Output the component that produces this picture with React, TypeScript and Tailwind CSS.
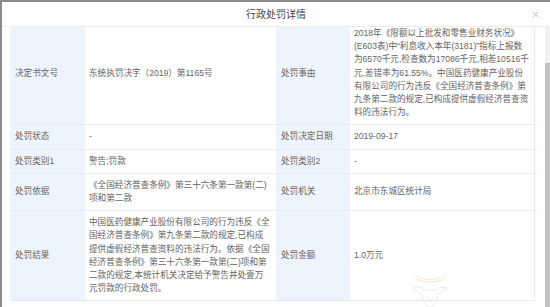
import { X } from "lucide-react";

const font = "font-['Liberation_Sans','Noto_Sans_CJK_SC',sans-serif]";

type Row = { l1: string; v1: string[]; l2: string; v2: string[] };

const rows: Row[] = [
  {
    l1: "决定书文号",
    v1: ["东统执罚决字（2019）第1165号"],
    l2: "处罚事由",
    v2: [
      "2018年《限额以上批发和零售业财务状况》",
      "(E603表)中“利息收入本年(3181)”指标上报数",
      "为6570千元,检查数为17086千元,相差10516千",
      "元,差错率为61.55%。中国医药健康产业股份",
      "有限公司的行为违反《全国经济普查条例》第",
      "九条第二款的规定,已构成提供虚假经济普查资",
      "料的违法行为。",
    ],
  },
  { l1: "处罚状态", v1: ["-"], l2: "处罚决定日期", v2: ["2019-09-17"] },
  { l1: "处罚类别1", v1: ["警告;罚款"], l2: "处罚类别2", v2: ["-"] },
  {
    l1: "处罚依据",
    v1: ["《全国经济普查条例》第三十六条第一款第(二)", "项和第二款"],
    l2: "处罚机关",
    v2: ["北京市东城区统计局"],
  },
  {
    l1: "处罚结果",
    v1: [
      "中国医药健康产业股份有限公司的行为违反《全",
      "国经济普查条例》第九条第二款的规定,已构成",
      "提供虚假经济普查资料的违法行为。依据《全国",
      "经济普查条例》第三十六条第一款第(二)项和第",
      "二款的规定,本统计机关决定给予警告并处壹万",
      "元罚款的行政处罚。",
    ],
    l2: "处罚金额",
    v2: ["1.0万元"],
  },
];

function Label({ text }: { text: string }) {
  return (
    <div className="flex items-center bg-[#eef4fb] border-b border-[#e3ebf5] px-[5px] py-[5px]">
      {text}
    </div>
  );
}

function Value({ lines }: { lines: string[] }) {
  return (
    <div className="flex flex-col justify-center border-b border-[#e3ebf5] px-[4px] py-[5px]">
      {lines.map((t, i) => (
        <span key={i} className="block whitespace-nowrap">
          {t}
        </span>
      ))}
    </div>
  );
}

export default function App() {
  return (
    <div className={`w-[550px] h-[307px] bg-[#8c8c8c] pl-[2px] pt-[2px] overflow-hidden ${font}`}>
      <div className="h-full bg-white flex flex-col">
        {/* header */}
        <div className="relative h-[25px] shrink-0 flex items-center justify-center border-b border-[#ececec] text-[10px] text-[#444]">
          行政处罚详情
          <X className="absolute right-[10px] top-[8px] w-[9px] h-[9px] text-[#777]" strokeWidth={1.2} />
        </div>

        {/* body */}
        <div className="flex-1 flex min-h-0">
          <div className="relative flex-1 overflow-hidden pl-[8px] pr-[10px]">
            <div className="-mt-[5px] grid grid-cols-[75px_191px_74px_185px] border-r border-[#e3ebf5] text-[8.6px] leading-[13.2px] text-[#656565]">
              {rows.map((r) => (
                <div key={r.l1} className="contents">
                  <Label text={r.l1} />
                  <Value lines={r.v1} />
                  <Label text={r.l2} />
                  <Value lines={r.v2} />
                </div>
              ))}
            </div>

            {/* watermark */}
            <svg
              className="absolute left-[408px] top-[241px] w-[40px] h-[40px] opacity-60"
              viewBox="0 0 40 40"
              fill="none"
            >
              <path d="M4 8 C6 16 34 16 36 8" stroke="#f2d3a4" strokeWidth="1" />
              <path d="M6 7 C9 13 31 13 34 7" stroke="#f2d3a4" strokeWidth="0.8" />
              <path
                d="M3 20 L10 19 L14 22 L26 22 L30 19 L37 20 L31 25 L28 26 L26 34 L22 39 L18 39 L14 34 L12 26 L9 25 Z"
                stroke="#dcdcdc"
                strokeWidth="0.9"
              />
              <path d="M16 30 L20 33 L24 30" stroke="#e0e0e0" strokeWidth="0.8" />
            </svg>
          </div>

          {/* scrollbar */}
          <div className="w-[5px] shrink-0 bg-[#f1f1f1] flex flex-col">
            <div className="mt-[36px] flex-1 bg-[#c1c1c1]" />
          </div>
        </div>
      </div>
    </div>
  );
}
